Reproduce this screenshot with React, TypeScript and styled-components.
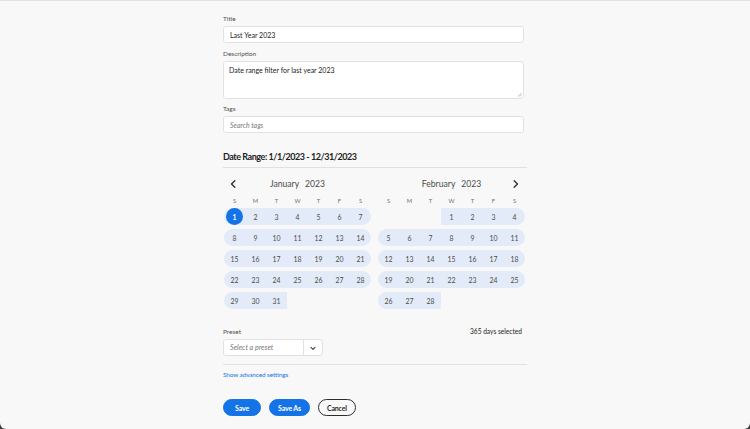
import React from 'react';
import styled, { createGlobalStyle } from 'styled-components';

const GlobalStyle = createGlobalStyle`
  html, body {
    margin: 0;
    padding: 0;
    background: #3c3c3c;
  }
  body {
    font-family: Lato, "Noto Sans", sans-serif;
  }
`;

const Page = styled.div`
  width: 750px;
  height: 429px;
  box-sizing: border-box;
  background: #f8f8f8;
  border-top: 1px solid #e3e3e3;
  border-radius: 0 0 6px 6px;
  overflow: hidden;
`;

const Form = styled.div`
  width: 304px;
  margin-left: 223px;
  padding-top: 13px;
  display: flex;
  flex-direction: column;
`;

const Label = styled.label<{ $top?: number }>`
  display: block;
  font-size: 6.5px;
  line-height: 10px;
  color: #505050;
  margin-top: ${p => p.$top ?? 0}px;
  margin-bottom: 2px;
`;

const TextInput = styled.div<{ $placeholder?: boolean }>`
  width: 301px;
  height: 17px;
  box-sizing: border-box;
  background: #fff;
  border: 1px solid #e1e1e1;
  border-radius: 3px;
  padding: 0 6px;
  display: flex;
  align-items: center;
  font-size: 7px;
  color: ${p => (p.$placeholder ? '#7a7a7a' : '#222')};
  font-style: ${p => (p.$placeholder ? 'italic' : 'normal')};
`;

const TextArea = styled.div`
  position: relative;
  width: 301px;
  height: 38px;
  box-sizing: border-box;
  background: #fff;
  border: 1px solid #e1e1e1;
  border-radius: 3px;
  padding: 4px 5px;
  font-size: 7px;
  line-height: 9px;
  color: #222;
`;

const Grip = styled.svg`
  position: absolute;
  right: 1px;
  bottom: 1px;
  width: 5px;
  height: 5px;
`;

const Heading = styled.h2`
  margin: 17px 0 0;
  font-size: 9px;
  line-height: 14px;
  font-weight: 700;
  letter-spacing: -0.45px;
  color: #222;
`;

const Divider = styled.hr<{ $top: number }>`
  width: 304px;
  margin: ${p => p.$top}px 0 0;
  border: none;
  border-top: 1px solid #e1e1e1;
`;

const Calendars = styled.div`
  display: flex;
  gap: 7px;
  margin-left: 1px;
  margin-top: 9px;
`;

const Month = styled.div`
  width: 147px;
`;

const MonthHeader = styled.div`
  position: relative;
  height: 14px;
  display: flex;
  align-items: center;
  justify-content: center;
  gap: 6px;
  font-size: 8.6px;
  color: #4b4b4b;
`;

const NavButton = styled.span<{ $side: 'left' | 'right' }>`
  position: absolute;
  top: 2px;
  ${p => (p.$side === 'left' ? 'left: 5px;' : 'right: 5px;')}
  width: 10px;
  height: 10px;
  display: flex;
  align-items: center;
  justify-content: center;
  color: #2c2c2c;
`;

const Weekdays = styled.div`
  display: grid;
  grid-template-columns: repeat(7, 21px);
  margin-top: 4px;
  height: 10px;
  align-items: center;
`;

const Weekday = styled.span`
  text-align: center;
  font-size: 5.8px;
  color: #6e6e6e;
`;

const Days = styled.div`
  display: grid;
  grid-template-columns: repeat(7, 21px);
  grid-auto-rows: 17px;
  row-gap: 4px;
  margin-top: 3px;
`;

const Day = styled.div<{ $range: boolean; $roundLeft: boolean; $roundRight: boolean }>`
  display: flex;
  align-items: center;
  justify-content: center;
  font-size: 6.9px;
  color: #4b4b4b;
  background: ${p => (p.$range ? '#e3ebf8' : 'transparent')};
  border-top-left-radius: ${p => (p.$roundLeft ? '9px' : '0')};
  border-bottom-left-radius: ${p => (p.$roundLeft ? '9px' : '0')};
  border-top-right-radius: ${p => (p.$roundRight ? '9px' : '0')};
  border-bottom-right-radius: ${p => (p.$roundRight ? '9px' : '0')};
`;

const Selected = styled.span`
  width: 17px;
  height: 17px;
  border-radius: 50%;
  background: #1473e6;
  color: #fff;
  font-weight: 700;
  display: flex;
  align-items: center;
  justify-content: center;
`;

const PresetRow = styled.div`
  display: flex;
  justify-content: space-between;
  align-items: flex-start;
  margin-top: 18px;
`;

const DaysCount = styled.span`
  font-size: 6.6px;
  line-height: 10px;
  color: #222;
  margin-right: 5px;
  margin-top: -1px;
`;

const Picker = styled.div`
  width: 100px;
  height: 17px;
  box-sizing: border-box;
  background: #fff;
  border: 1px solid #e1e1e1;
  border-radius: 3px;
  display: flex;
`;

const PickerValue = styled.span`
  flex: 1;
  display: flex;
  align-items: center;
  padding-left: 6px;
  font-size: 7.2px;
  font-style: italic;
  color: #7a7a7a;
`;

const PickerButton = styled.span`
  width: 18px;
  border-left: 1px solid #e1e1e1;
  display: flex;
  align-items: center;
  justify-content: center;
  color: #4b4b4b;
`;

const Link = styled.a`
  margin-top: 5px;
  font-size: 6.4px;
  line-height: 10px;
  letter-spacing: -0.1px;
  color: #1473e6;
  text-decoration: none;
`;

const Actions = styled.div`
  display: flex;
  gap: 8px;
  margin-top: 19px;
`;

const Button = styled.button<{ $variant: 'primary' | 'secondary' }>`
  height: 17px;
  min-width: 38px;
  box-sizing: border-box;
  padding: 0 ${p => (p.$variant === 'primary' ? '8px' : '6px')};
  border-radius: 9px;
  font-family: inherit;
  font-size: 7px;
  letter-spacing: -0.15px;
  font-weight: 700;
  cursor: pointer;
  background: ${p => (p.$variant === 'primary' ? '#1473e6' : 'transparent')};
  color: ${p => (p.$variant === 'primary' ? '#fff' : '#2c2c2c')};
  border: ${p => (p.$variant === 'primary' ? '1px solid #1473e6' : '1.5px solid #2c2c2c')};
`;

const Chevron = ({ dir }: { dir: 'left' | 'right' | 'down' }) => {
  const d = dir === 'left' ? 'M7 2 3 6l4 4' : dir === 'right' ? 'M5 2l4 4-4 4' : 'M3 5l3 3 3-3';
  const size = dir === 'down' ? 8 : 10;
  return (
    <svg width={size} height={size} viewBox="0 0 12 12" fill="none" stroke="currentColor" strokeWidth={dir === 'down' ? 1.8 : 1.6} strokeLinecap="round" strokeLinejoin="round">
      <path d={d} />
    </svg>
  );
};

const WEEKDAYS = ['S', 'M', 'T', 'W', 'T', 'F', 'S'];

type MonthProps = { name: string; year: number; startDay: number; length: number; nav: 'left' | 'right' };

const MonthView = ({ name, year, startDay, length, nav }: MonthProps) => {
  const cells: (number | null)[] = [];
  for (let i = 0; i < startDay; i++) cells.push(null);
  for (let d = 1; d <= length; d++) cells.push(d);
  return (
    <Month>
      <MonthHeader>
        <NavButton $side={nav}>
          <Chevron dir={nav} />
        </NavButton>
        <span>{name}</span>
        <span>{year}</span>
      </MonthHeader>
      <Weekdays>
        {WEEKDAYS.map((w, i) => (
          <Weekday key={i}>{w}</Weekday>
        ))}
      </Weekdays>
      <Days>
        {cells.map((d, i) => {
          const wd = i % 7;
          return (
            <Day key={i} $range={d !== null} $roundLeft={d !== null && wd === 0} $roundRight={d !== null && wd === 6}>
              {d === 1 && name === 'January' ? <Selected>{d}</Selected> : d}
            </Day>
          );
        })}
      </Days>
    </Month>
  );
};

export default function App() {
  return (
    <Page>
      <GlobalStyle />
      <Form>
        <Label>Title</Label>
        <TextInput>Last Year 2023</TextInput>
        <Label $top={6}>Description</Label>
        <TextArea>
          Date range filter for last year 2023
          <Grip viewBox="0 0 5 5">
            <path d="M4.5 1 1 4.5M4.5 3 3 4.5" stroke="#8a8a8a" strokeWidth={0.6} />
          </Grip>
        </TextArea>
        <Label $top={5}>Tags</Label>
        <TextInput $placeholder>Search tags</TextInput>
        <Heading>Date Range: 1/1/2023 - 12/31/2023</Heading>
        <Divider $top={3} />
        <Calendars>
          <MonthView name="January" year={2023} startDay={0} length={31} nav="left" />
          <MonthView name="February" year={2023} startDay={3} length={28} nav="right" />
        </Calendars>
        <PresetRow>
          <div>
            <Label>Preset</Label>
            <Picker>
              <PickerValue>Select a preset</PickerValue>
              <PickerButton>
                <Chevron dir="down" />
              </PickerButton>
            </Picker>
          </div>
          <DaysCount>365 days selected</DaysCount>
        </PresetRow>
        <Divider $top={8} />
        <Link href="#">Show advanced settings</Link>
        <Actions>
          <Button $variant="primary">Save</Button>
          <Button $variant="primary">Save As</Button>
          <Button $variant="secondary">Cancel</Button>
        </Actions>
      </Form>
    </Page>
  );
}
